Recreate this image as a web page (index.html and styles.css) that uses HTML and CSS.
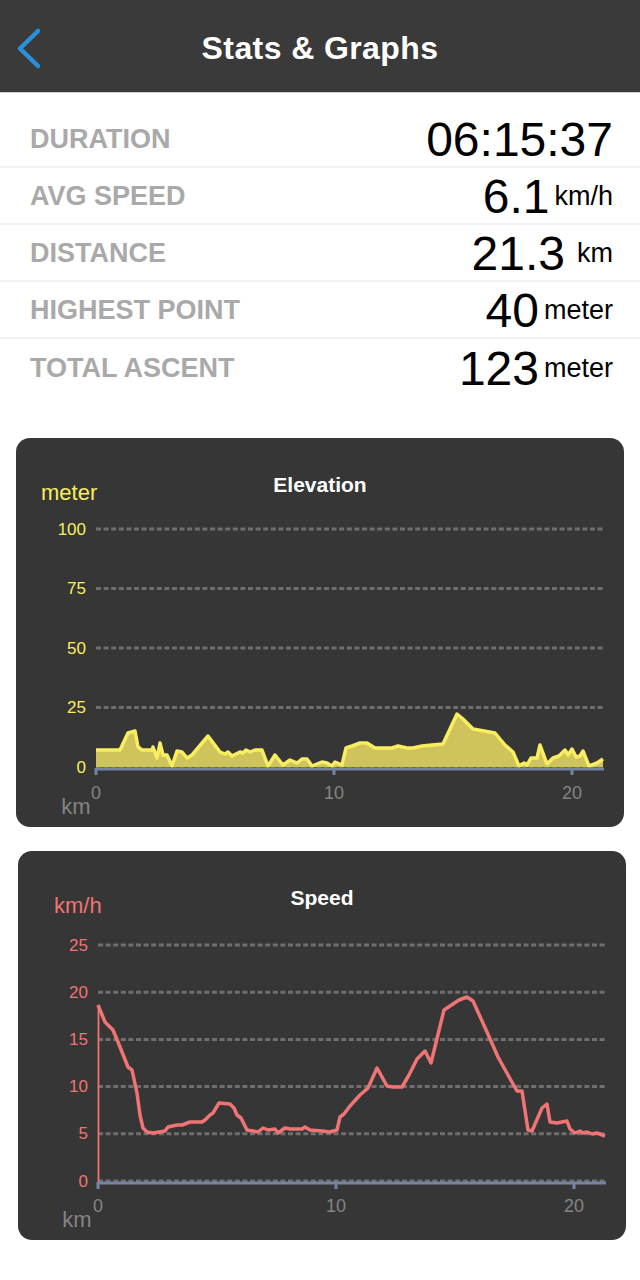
FILE: index.html
```html
<!DOCTYPE html>
<html lang="en">
  <head>
    <meta charset="UTF-8" />
    <meta name="viewport" content="width=device-width, initial-scale=1.0" />
    <title>Stats &amp; Graphs</title>
    <link rel="stylesheet" href="styles.css">
  </head>
  <body>
    <header class="topbar">
      <a href="#" class="back" aria-label="Back">
        <svg width="30" height="44" viewBox="0 0 30 44">
          <path d="M24 5 L6 22.5 L24 40" />
        </svg>
      </a>
      <h1>Stats &amp; Graphs</h1>
      <span></span>
    </header>

    <section class="stats">
      <div class="stat-row">
        <span class="stat-label">DURATION</span>
        <span class="stat-value"><span class="num">06:15:37</span></span>
      </div>
      <div class="stat-row">
        <span class="stat-label">AVG SPEED</span>
        <span class="stat-value"><span class="num">6.1</span><span class="unit">km/h</span></span>
      </div>
      <div class="stat-row">
        <span class="stat-label">DISTANCE</span>
        <span class="stat-value"><span class="num">21.3</span><span class="unit spaced">km</span></span>
      </div>
      <div class="stat-row">
        <span class="stat-label">HIGHEST POINT</span>
        <span class="stat-value"><span class="num">40</span><span class="unit">meter</span></span>
      </div>
      <div class="stat-row">
        <span class="stat-label">TOTAL ASCENT</span>
        <span class="stat-value"><span class="num">123</span><span class="unit">meter</span></span>
      </div>
    </section>

    <section class="chart-card elevation">
      <div class="chart-head">
        <span class="chart-unit">meter</span>
        <h2>Elevation</h2>
        <span></span>
      </div>
      <svg class="chart" width="608" height="321" viewBox="0 0 608 321">
        <g class="grid">
          <line x1="80" y1="23" x2="588" y2="23" />
          <line x1="80" y1="82.5" x2="588" y2="82.5" />
          <line x1="80" y1="142" x2="588" y2="142" />
          <line x1="80" y1="201.5" x2="588" y2="201.5" />
          <line x1="80" y1="261" x2="588" y2="261" />
        </g>
        <g class="y-labels">
          <text x="70" y="23">100</text>
          <text x="70" y="82.5">75</text>
          <text x="70" y="142">50</text>
          <text x="70" y="201.5">25</text>
          <text x="70" y="261">0</text>
        </g>
        <polygon class="area" points="80,261 80,244 104,244 112,227 119,225 122,241 126,244 136,244 137,241 141,252 144,237 147,249 151,249 156,260 161,245 166,246 171,252 176,249 192,230 204,246 209,248 212,246 216,250 224,246 227,247 230,244 234,246 239,244 246,244 252,260 259,249 267,259 274,254 281,257 286,253 291,253 296,260 306,256 311,257 316,260 319,256 326,259 330,242 336,240 344,237 351,237 359,242 376,242 382,240 391,242 397,242 406,240 416,239 427,238 441,208 447,213 457,223 479,227 489,239 497,246 503,260 508,257 511,259 515,252 521,252 524,239 531,258 537,252 543,250 549,244 552,249 556,243 560,251 564,250 567,245 573,260 581,257 587,253 587,261" />
        <polyline class="line-elev" points="80,244 104,244 112,227 119,225 122,241 126,244 136,244 137,241 141,252 144,237 147,249 151,249 156,260 161,245 166,246 171,252 176,249 192,230 204,246 209,248 212,246 216,250 224,246 227,247 230,244 234,246 239,244 246,244 252,260 259,249 267,259 274,254 281,257 286,253 291,253 296,260 306,256 311,257 316,260 319,256 326,259 330,242 336,240 344,237 351,237 359,242 376,242 382,240 391,242 397,242 406,240 416,239 427,238 441,208 447,213 457,223 479,227 489,239 497,246 503,260 508,257 511,259 515,252 521,252 524,239 531,258 537,252 543,250 549,244 552,249 556,243 560,251 564,250 567,245 573,260 581,257 587,253" />
        <g class="axis">
          <line x1="80" y1="263" x2="588" y2="263" />
          <line x1="80" y1="262" x2="80" y2="269" />
          <line x1="318" y1="262" x2="318" y2="269" />
          <line x1="556" y1="262" x2="556" y2="269" />
        </g>
        <g class="x-labels">
          <text x="80" y="287">0</text>
          <text x="318" y="287">10</text>
          <text x="556" y="287">20</text>
        </g>
        <text class="x-unit" x="60" y="300">km</text>
      </svg>
    </section>

    <section class="chart-card speed">
      <div class="chart-head">
        <span class="chart-unit">km/h</span>
        <h2>Speed</h2>
        <span></span>
      </div>
      <svg class="chart" width="608" height="321" viewBox="0 0 608 321">
        <g class="grid">
          <line x1="80" y1="26" x2="588" y2="26" />
          <line x1="80" y1="73.2" x2="588" y2="73.2" />
          <line x1="80" y1="120.4" x2="588" y2="120.4" />
          <line x1="80" y1="167.6" x2="588" y2="167.6" />
          <line x1="80" y1="214.8" x2="588" y2="214.8" />
          <line x1="80" y1="262" x2="588" y2="262" />
        </g>
        <g class="y-labels">
          <text x="70" y="26">25</text>
          <text x="70" y="73.2">20</text>
          <text x="70" y="120.4">15</text>
          <text x="70" y="167.6">10</text>
          <text x="70" y="214.8">5</text>
          <text x="70" y="262">0</text>
        </g>
        <line class="line-start" x1="80.5" y1="263" x2="80.5" y2="86" />
        <polyline class="line-speed" points="80,86 87,103 95,111 100,123 110,148 114,151 119,174 122,196 125,209 129,213 135,214 147,212 150,208 159,206 164,206 172,203 184,203 187,201 192,196 195,194 201,184 212,185 216,189 219,196 223,199 229,211 240,213 245,209 250,211 257,210 260,214 267,209 272,210 284,210 287,208 292,211 304,212 312,213 319,211 322,198 326,195 332,187 342,176 350,169 359,149 369,167 375,168 384,168 391,156 399,140 407,132 413,144 426,91 441,81 449,78 455,82 469,113 480,138 490,156 499,172 504,172 510,211 514,212 524,189 529,185 532,203 539,204 549,202 552,210 557,214 562,212 565,214 569,213 574,215 579,214 587,217" />
        <g class="axis">
          <line x1="80" y1="264" x2="588" y2="264" />
          <line x1="80" y1="263" x2="80" y2="270" />
          <line x1="318" y1="263" x2="318" y2="270" />
          <line x1="556" y1="263" x2="556" y2="270" />
        </g>
        <g class="x-labels">
          <text x="80" y="287">0</text>
          <text x="318" y="287">10</text>
          <text x="556" y="287">20</text>
        </g>
        <text class="x-unit" x="59" y="300">km</text>
      </svg>
    </section>
  </body>
</html>
```

FILE: styles.css
```css
:root {
  --bar-color: #3a3a3a;
  --card-color: #363636;
  --label-color: #a9a9a9;
  --line-color: #f1f1f1;
  --elev-color: #f8ee60;
  --speed-color: #f07474;
  --axis-color: #7484a2;
}

* {
  box-sizing: border-box;
  margin: 0;
  padding: 0;
}

body {
  font-family: "Liberation Sans", Arial, sans-serif;
  color: #000;
  background-color: #fff;
  width: 640px;
}

.topbar {
  height: 93px;
  background-color: var(--bar-color);
  border-bottom: 1px solid #cfcfcf;
  display: grid;
  grid-template-columns: 80px 1fr 80px;
  align-items: center;
}

.back {
  display: flex;
  padding-left: 14px;
  padding-top: 4px;
}

.back path {
  fill: none;
  stroke: #2a90dc;
  stroke-width: 4.5;
  stroke-linecap: round;
  stroke-linejoin: round;
}

.topbar h1 {
  color: #fff;
  font-size: 32px;
  font-weight: 700;
  text-align: center;
  letter-spacing: 0.4px;
  padding-top: 5px;
}

.stats {
  margin-top: 18px;
}

.stat-row {
  height: 57px;
  display: flex;
  align-items: center;
  justify-content: space-between;
  padding: 2px 27px 0 30px;
  border-bottom: 2px solid var(--line-color);
}

.stat-row:last-child {
  border-bottom: none;
}

.stat-label {
  color: var(--label-color);
  font-size: 27px;
  font-weight: 700;
}

.stat-value {
  display: flex;
  align-items: center;
}

.num {
  font-size: 48px;
  line-height: 1;
}

.unit {
  font-size: 27px;
  line-height: 1;
  margin-left: 5px;
}

.unit.spaced {
  margin-left: 12px;
}

.chart-card {
  height: 389px;
  margin: 42px 16px 0 16px;
  background-color: var(--card-color);
  border-radius: 14px;
  padding-top: 34px;
  display: flex;
  flex-direction: column;
}

.chart-card.speed {
  margin: 24px 14px 0 18px;
}

.chart-head {
  height: 34px;
  display: grid;
  grid-template-columns: 1fr auto 1fr;
  padding: 0 25px;
}

.chart-head h2 {
  color: #fff;
  font-size: 21px;
  font-weight: 700;
  line-height: 26px;
  align-self: start;
}

.chart-unit {
  font-size: 22px;
  line-height: 26px;
  align-self: end;
}

.speed .chart-unit {
  padding-left: 11px;
}

.elevation .chart-unit {
  color: var(--elev-color);
}

.speed .chart-unit {
  color: var(--speed-color);
}

.chart {
  display: block;
}

.chart text {
  font-family: "Liberation Sans", Arial, sans-serif;
  dominant-baseline: central;
}

.grid line {
  stroke: #6f6f6f;
  stroke-width: 3;
  stroke-dasharray: 5 2.6;
}

.y-labels text {
  font-size: 17px;
  text-anchor: end;
}

.elevation .y-labels text {
  fill: var(--elev-color);
}

.speed .y-labels text {
  fill: var(--speed-color);
}

.area {
  fill: #cfc45b;
}

.line-elev {
  fill: none;
  stroke: var(--elev-color);
  stroke-width: 3.5;
  stroke-linejoin: round;
}

.line-speed {
  fill: none;
  stroke: var(--speed-color);
  stroke-width: 3.5;
  stroke-linejoin: round;
}

.line-start {
  stroke: var(--speed-color);
  stroke-width: 1.8;
}

.axis line {
  stroke: var(--axis-color);
  stroke-width: 3;
}

.x-labels text {
  fill: #848484;
  font-size: 18px;
  text-anchor: middle;
}

.x-unit {
  fill: #848484;
  font-size: 22px;
  text-anchor: middle;
}
```
